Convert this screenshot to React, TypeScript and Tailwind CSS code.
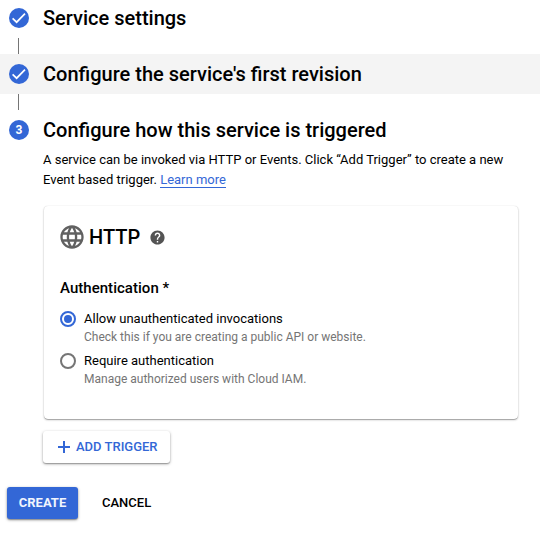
import type { ReactNode } from 'react';

function CheckBadge() {
  return (
    <svg className="block size-5" viewBox="0 0 20 20">
      <circle cx="10" cy="10" r="10" fill="#3367d6" />
      <path d="M3.6 10.4L7.6 14.2L16 5.6" fill="none" stroke="#fff" strokeWidth="1.7" />
    </svg>
  );
}

function Step({ badge, children }: { badge: ReactNode; children: ReactNode }) {
  return (
    <div className="flex h-10 items-center pl-[9px]">
      {badge}
      <h2 className="ml-[14px] text-[20px] leading-10 font-medium whitespace-nowrap">{children}</h2>
    </div>
  );
}

function Connector() {
  return <div className="ml-[18px] h-4 w-px bg-[#757575]" />;
}

function Option({ checked, label, hint }: { checked?: boolean; label: string; hint: string }) {
  return (
    <div className="flex h-[42px]">
      <span className={`mt-[2px] flex size-4 shrink-0 items-center justify-center rounded-full border-2 ${checked ? 'border-[#3367d6]' : 'border-[#757575]'}`}>
        {checked && <span className="size-2 rounded-full bg-[#3367d6]" />}
      </span>
      <div className="ml-2 whitespace-nowrap">
        <div className="text-[13px] leading-5">{label}</div>
        <div className="text-[12px] leading-4 text-[#757575]">{hint}</div>
      </div>
    </div>
  );
}

export default function App() {
  return (
    <main className="h-[540px] w-[540px] overflow-hidden bg-white text-black [font-family:Roboto,sans-serif]">
      <div className="-mt-0.5">
        <Step badge={<CheckBadge />}>Service settings</Step>
      </div>
      <Connector />
      <div className="bg-[#f4f4f4]">
        <Step badge={<CheckBadge />}>Configure the service's first revision</Step>
      </div>
      <Connector />
      <Step
        badge={
          <span className="flex size-5 items-center justify-center rounded-full bg-[#3367d6] text-[12px] leading-5 font-bold text-white">3</span>
        }
      >
        Configure how this service is triggered
      </Step>

      <section className="ml-[43px] w-[476px]">
        <p className="text-[13px] leading-5 whitespace-nowrap">
          A service can be invoked via HTTP or Events. Click “Add Trigger” to create a new
          <br />
          Event based trigger.{' '}
          <a className="border-b border-[#3367d6] text-[#3367d6]">Learn more</a>
        </p>

        <div className="mt-4 ml-px h-[213px] w-[474px] rounded-[4px] pt-[18px] pl-4 shadow-[0_1px_2px_rgba(0,0,0,0.3),0_0_1px_rgba(0,0,0,0.15),0_1px_0_-0.5px_rgba(0,0,0,0.25)]">
          <div className="flex h-[26px] items-center">
            <svg className="-ml-[2px] size-[28px] shrink-0 fill-[#616161]" viewBox="0 0 24 24">
              <path d="M11.99 2C6.47 2 2 6.48 2 12s4.47 10 9.99 10C17.52 22 22 17.52 22 12S17.52 2 11.99 2zm6.93 6h-2.95c-.32-1.25-.78-2.45-1.38-3.56 1.84.63 3.37 1.91 4.33 3.56zM12 4.04c.83 1.2 1.48 2.53 1.91 3.96h-3.82c.43-1.43 1.08-2.76 1.91-3.96zM4.26 14C4.1 13.36 4 12.69 4 12s.1-1.36.26-2h3.38c-.08.66-.14 1.32-.14 2s.06 1.34.14 2H4.26zm.82 2h2.95c.32 1.25.78 2.45 1.38 3.56-1.84-.63-3.37-1.9-4.33-3.56zm2.95-8H5.08c.96-1.66 2.49-2.93 4.33-3.56C8.81 5.55 8.35 6.75 8.03 8zM12 19.96c-.83-1.2-1.48-2.53-1.91-3.96h3.82c-.43 1.43-1.08 2.76-1.91 3.96zM14.34 14H9.66c-.09-.66-.16-1.32-.16-2s.07-1.35.16-2h4.68c.09.65.16 1.32.16 2s-.07 1.34-.16 2zm.25 5.56c.6-1.11 1.06-2.31 1.38-3.56h2.95c-.96 1.65-2.49 2.93-4.33 3.56zM16.36 14c.08-.66.14-1.32.14-2s-.06-1.34-.14-2h3.38c.16.64.26 1.31.26 2s-.1 1.36-.26 2h-3.38z" />
            </svg>
            <h3 className="ml-[3px] text-[20px] leading-[26px] font-medium">HTTP</h3>
            <svg className="mt-px ml-[8.5px] size-[17px] shrink-0 fill-[#545454]" viewBox="0 0 24 24">
              <path d="M12 2C6.48 2 2 6.48 2 12s4.48 10 10 10 10-4.480 10-10S17.520 2 12 2zm1 17h-2v-2h2v2zm2.070-7.750l-.9.920C13.450 12.900 13 13.500 13 15h-2v-.5c0-1.100.450-2.100 1.170-2.830l1.240-1.260c.370-.360.590-.860.590-1.410 0-1.100-.9-2-2-2s-2 .9-2 2H8c0-2.210 1.790-4 4-4s4 1.790 4 4c0 .880-.360 1.680-.930 2.250z" />
            </svg>
          </div>
          <h4 className="mt-[28px] text-[15px] leading-5 font-medium tracking-[0.03px]">Authentication *</h4>
          <div className="mt-[11px]">
            <Option checked label="Allow unauthenticated invocations" hint="Check this if you are creating a public API or website." />
            <Option label="Require authentication" hint="Manage authorized users with Cloud IAM." />
          </div>
        </div>

        <button className="mt-3 flex h-8 w-[127px] items-center rounded-[3px] bg-white pl-[15px] text-[13px] font-medium whitespace-nowrap text-[#3367d6] shadow-[0_1px_3px_rgba(0,0,0,0.35),0_1px_1px_rgba(0,0,0,0.2)]">
          <svg className="size-3 shrink-0" viewBox="0 0 12 12">
            <path d="M6 0V12M0 6H12" stroke="#3367d6" strokeWidth="2" />
          </svg>
          <span className="ml-[6px]">ADD TRIGGER</span>
        </button>
      </section>

      <div className="mt-6 ml-[7px] flex h-8 items-center text-[13px]">
        <button className="h-8 w-[71px] rounded-[3px] bg-[#3367d6] font-bold text-[#f1f5fd] shadow-[0_1px_3px_rgba(0,0,0,0.4),0_1px_1px_rgba(0,0,0,0.2)]">CREATE</button>
        <button className="ml-6 font-medium">CANCEL</button>
      </div>
    </main>
  );
}
